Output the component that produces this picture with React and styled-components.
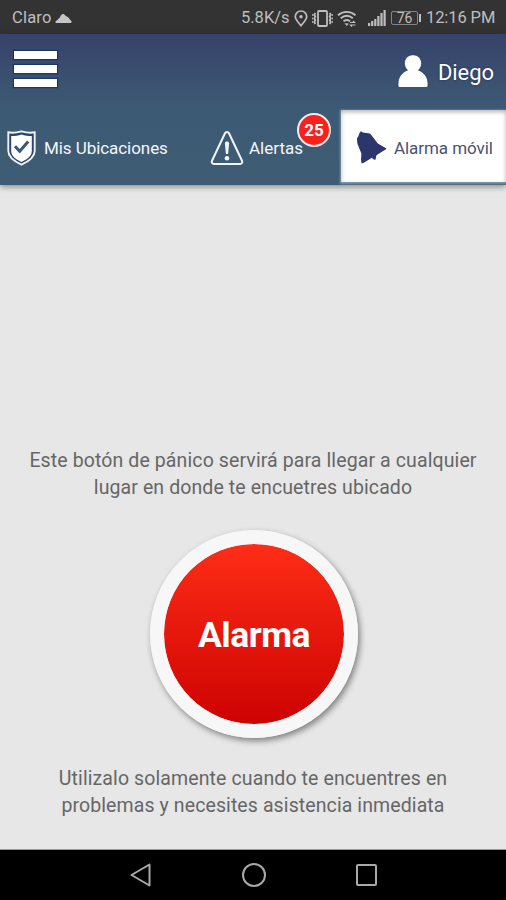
import React from "react";
import styled, { createGlobalStyle } from "styled-components";

const GlobalStyle = createGlobalStyle`
  * {
    box-sizing: border-box;
  }
  body {
    margin: 0;
    background: #000;
    font-family: Roboto, "Liberation Sans", sans-serif;
  }
`;

const Phone = styled.div`
  width: 506px;
  height: 900px;
  display: flex;
  flex-direction: column;
  overflow: hidden;
  & svg {
    display: block;
    flex: none;
  }
`;

const StatusBar = styled.div`
  height: 34px;
  flex: none;
  display: flex;
  align-items: center;
  padding: 2px 10px 0 12px;
  background: #333;
  color: #bebebe;
`;

const StatusText = styled.span`
  width: ${(props) => props.$width}px;
  font-size: 16.5px;
  line-height: 20px;
  letter-spacing: ${(props) => props.$spacing || 0}px;
  white-space: nowrap;
`;

const StatusIcons = styled.div`
  margin-left: auto;
  display: flex;
  align-items: center;
`;

const Gap = styled.span`
  width: ${(props) => props.$size}px;
`;

const Header = styled.header`
  position: relative;
  height: 151px;
  flex: none;
  display: flex;
  flex-direction: column;
  background: linear-gradient(#36426a 0%, #3d5a74 50%, #3f5c75 100%);
  box-shadow: 0 2px 6px rgba(0, 0, 0, 0.4);
`;

const TopRow = styled.div`
  height: 76px;
  flex: none;
  display: flex;
  justify-content: space-between;
  padding: 0 12px 0 14px;
`;

const MenuButton = styled.div`
  width: 43px;
  height: 36px;
  margin-top: 17px;
  display: flex;
  flex-direction: column;
  justify-content: space-between;
`;

const MenuBar = styled.div`
  height: 8px;
  background: #fff;
  box-shadow: 0 0 1px 1px rgba(8, 42, 100, 0.65);
`;

const User = styled.div`
  display: flex;
  align-items: flex-start;
  padding-top: 20px;
`;

const UserName = styled.span`
  width: 56px;
  margin: 5px 0 0 9px;
  color: #fff;
  font-size: 22px;
  line-height: 28px;
  letter-spacing: -0.1px;
  white-space: nowrap;
  text-shadow: 0 0 2px #182850;
`;

const Tabs = styled.nav`
  flex: 1;
  display: grid;
  grid-template-columns: 203px 138px 165px;
`;

const Tab = styled.div`
  position: relative;
  display: flex;
  align-items: center;
  height: ${(props) => (props.$active ? 72 : 75)}px;
  padding: ${(props) => props.$pad};
  background: ${(props) => (props.$active ? "#fff" : "transparent")};
  color: ${(props) => (props.$active ? "#4a5273" : "#f4f6fa")};
  box-shadow: ${(props) =>
    props.$active
      ? "inset 0 2px 4px rgba(0, 0, 0, 0.3), 0 1px 2px 1px rgba(190, 208, 222, 0.5)"
      : "none"};
`;

const TabLabel = styled.span`
  margin-left: ${(props) => props.$gap}px;
  font-size: 17px;
  line-height: 22px;
  letter-spacing: ${(props) => props.$spacing}px;
  white-space: nowrap;
`;

const Badge = styled.span`
  position: absolute;
  top: 3px;
  right: 10px;
  width: 34px;
  height: 34px;
  display: flex;
  align-items: center;
  justify-content: center;
  border: 2px solid #f3e9ee;
  border-radius: 50%;
  background: #f9211b;
  color: #fff;
  font-size: 17px;
  font-weight: 700;
  line-height: 20px;
`;

const Main = styled.main`
  flex: 1;
  display: flex;
  flex-direction: column;
  align-items: center;
  padding-top: 262px;
  background: #e7e7e7;
  border-bottom: 1px solid #999;
`;

const Hint = styled.p`
  margin: 0;
  display: flex;
  flex-direction: column;
  align-items: center;
  color: #666;
  font-size: 19.5px;
  line-height: 27px;
`;

const HintLine = styled.span`
  letter-spacing: ${(props) => props.$spacing}px;
  white-space: nowrap;
`;

const AlarmButton = styled.button`
  width: 208px;
  height: 208px;
  margin: 29px 0 27px 2px;
  padding: 2px 0 0;
  border: 14px solid #f7f7f7;
  border-radius: 50%;
  background: linear-gradient(#fe2d17, #cd0202) padding-box;
  box-shadow: 2px 3px 6px rgba(0, 0, 0, 0.45);
  color: #fff;
  font-family: inherit;
  font-size: 35.5px;
  font-weight: 700;
  line-height: 42px;
  letter-spacing: -0.5px;
`;

const NavBar = styled.div`
  height: 50px;
  flex: none;
  display: flex;
  align-items: center;
  justify-content: center;
  gap: 89px;
  background: #000;
`;

const CloudIcon = () => (
  <svg width="17" height="11" viewBox="0 0 17 11" fill="#c6c6c6">
    <path d="M1.200 10C-.2 9.600.2 8 1.800 7.400L5 4.300C6 1.600 7.500.6 9 1.200l2 1.900 2.700 1.700L15.500 7.200C17 8 17 9.600 15.800 10z" />
  </svg>
);

const PinIcon = () => (
  <svg width="14" height="17" viewBox="0 0 14 17" fill="none" stroke="#bebebe" strokeWidth="1.700">
    <path d="M7 15.700C4.500 12.500 1.300 9.600 1.300 6.700a5.700 5.700 0 0 1 11.400 0c0 2.900-3.200 5.800-5.700 9z" />
    <circle cx="7" cy="6.700" r="1.700" fill="#bebebe" stroke="none" />
  </svg>
);

const VibrateIcon = () => (
  <svg width="21" height="17" viewBox="0 0 21 17" fill="none" stroke="#bebebe">
    <rect x="6" y="1" width="9" height="15" rx="1" strokeWidth="1.800" />
    <path
      d="M3.300 3l-1 1.800 1 1.800-1 1.800 1 1.800-1 1.800 1 2M17.700 3l1 1.800-1 1.800 1 1.800-1 1.800 1 1.800-1 2"
      strokeWidth="1.800"
    />
    <path d="M.7 4v9M20.300 4v9" strokeWidth="1" strokeDasharray="2 1.500" />
  </svg>
);

const WifiIcon = () => (
  <svg width="20" height="17" viewBox="0 0 20 17" fill="none" stroke="#bebebe" strokeWidth="1.900">
    <path d="M1 5.200C6 .7 13.500.7 18.500 5.200M3.800 8.300c3.700-3.100 8.300-3.100 12 0M6.500 11.300c2-1.600 4.600-1.600 6.600 0" />
    <path d="M7.500 13.300l2.300 2.700 2-2.500z" fill="#bebebe" stroke="none" />
    <path d="M13 12.500h4.500l-1.500-1.500M18.500 15H13.500l1.500 1.500" strokeWidth="1.200" />
  </svg>
);

const SignalIcon = () => (
  <svg width="18" height="16" viewBox="0 0 18 16" fill="#bebebe">
    <path d="M0 13h2.200v3H0zM3.100 11h2.200v5H3.100zM6.200 9h2.200v7H6.200zM9.300 6h2.200v10H9.300zM12.400 3h2.200v13h-2.200zM15.500 0h2.200v16h-2.200z" />
  </svg>
);

const Battery = styled.div`
  position: relative;
  width: 27px;
  height: 14px;
  margin: 0 8px 0 5px;
  border: 1px solid #858585;
  border-radius: 2px;
  font-size: 14px;
  line-height: 13px;
  text-align: center;
  &::after {
    content: "";
    position: absolute;
    top: 2px;
    right: -4px;
    width: 2px;
    height: 8px;
    background: #bebebe;
  }
`;

const UserIcon = () => (
  <svg width="32" height="34" viewBox="0 0 32 34">
    <path
      d="M16 .8c5 0 8.600 3.700 8.600 8.500 0 3.200-1.500 5.400-3.100 6.900 5.600 1.900 9.500 7 9.500 13.300v2c0 1.300-.8 2-2 2H3c-1.200 0-2-.7-2-2v-2c0-6.300 3.900-11.400 9.500-13.300-1.600-1.500-3.100-3.700-3.100-6.900C7.400 4.500 11 .8 16 .8z"
      fill="#fff"
      stroke="#253c68"
      strokeWidth=".8"
    />
  </svg>
);

const ShieldIcon = () => (
  <svg width="29" height="36" viewBox="0 0 29 36">
    <path
      d="M1.300 2.300C6 3.300 10 2.600 14.500 1.300 19 2.600 23 3.300 27.700 2.300V21c0 6.300-5.300 10-13.200 13.700C6.600 31 1.300 27.300 1.300 21z"
      fill="#2c4372"
      stroke="#eef2f7"
      strokeWidth="1.900"
    />
    <path
      d="M4.200 6C8 6 11.200 5.600 14.500 4.400 17.800 5.600 21 6 24.800 6v15c0 5-4 7.900-10.300 10.900C8.200 28.900 4.200 26 4.200 21z"
      fill="#fff"
    />
    <path d="M8 16.300l4.700 5 8.500-9.700" fill="none" stroke="#3a5776" strokeWidth="3" />
  </svg>
);

const WarningIcon = () => (
  <svg width="34" height="36" viewBox="0 0 34 36">
    <path
      d="M15 3.300c.8-1.700 3.200-1.700 4 0l13 27.400c.8 1.700-.2 3.300-2 3.300H4c-1.800 0-2.800-1.600-2-3.300z"
      fill="none"
      stroke="#f1f5f9"
      strokeWidth="2"
    />
    <path d="M14.900 13.500c0-2.600 4.200-2.600 4.200 0l-1 10.500h-2.200z" fill="#f1f5f9" />
    <circle cx="17" cy="28.300" r="2.300" fill="#f1f5f9" />
  </svg>
);

const BellIcon = () => (
  <svg width="32" height="34" viewBox="0 0 32 34">
    <path
      d="M4 2.500L5 1l2 1.200L13.500 3l4.500 5.500 3.500 4.500 8.200 4.800-8.200 5-1.800 1.500L19 28.200l-1.700-.8-.8-1.700L7 31.500l-1 .3-.3-3L6 22.500 2 12.500l-.5-4.700L3 5.200z"
      fill="#2b376a"
      stroke="#2b376a"
      strokeWidth="1.200"
      strokeLinejoin="round"
    />
  </svg>
);

const BackIcon = () => (
  <svg width="24" height="26" viewBox="0 0 24 26" fill="none" stroke="#a9a9a9" strokeWidth="2">
    <path d="M21.500 2.500v21L3.500 13z" strokeLinejoin="round" />
  </svg>
);

const HomeIcon = () => (
  <svg width="26" height="26" viewBox="0 0 26 26" fill="none" stroke="#a9a9a9" strokeWidth="2">
    <circle cx="13" cy="13" r="11" />
  </svg>
);

const RecentsIcon = () => (
  <svg width="22" height="24" viewBox="0 0 22 24" fill="none" stroke="#a9a9a9" strokeWidth="2">
    <rect x="1" y="2" width="19" height="20" rx="1" />
  </svg>
);

const App = () => {
  return (
    <Phone>
      <GlobalStyle />
      <StatusBar>
        <StatusText $width={43} $spacing={0.2}>Claro</StatusText>
        <CloudIcon />
        <StatusIcons>
          <StatusText $width={53}>5.8K/s</StatusText>
          <PinIcon />
          <Gap $size={4} />
          <VibrateIcon />
          <Gap $size={4} />
          <WifiIcon />
          <Gap $size={11} />
          <SignalIcon />
          <Battery>76</Battery>
          <StatusText $width={70} $spacing={-0.1}>12:16 PM</StatusText>
        </StatusIcons>
      </StatusBar>
      <Header>
        <TopRow>
          <MenuButton>
            <MenuBar />
            <MenuBar />
            <MenuBar />
          </MenuButton>
          <User>
            <UserIcon />
            <UserName>Diego</UserName>
          </User>
        </TopRow>
        <Tabs>
          <Tab $pad="0 0 0 7px">
            <ShieldIcon />
            <TabLabel $gap={8} $spacing={-0.06}>Mis Ubicaciones</TabLabel>
          </Tab>
          <Tab $pad="0 0 0 7px">
            <WarningIcon />
            <TabLabel $gap={5} $spacing={0}>Alertas</TabLabel>
            <Badge>25</Badge>
          </Tab>
          <Tab $active $pad="4px 0 0 15px">
            <BellIcon />
            <TabLabel $gap={6} $spacing={-0.06}>Alarma móvil</TabLabel>
          </Tab>
        </Tabs>
      </Header>
      <Main>
        <Hint>
          <HintLine $spacing={0.11}>Este botón de pánico servirá para llegar a cualquier</HintLine>
          <HintLine $spacing={0.1}>lugar en donde te encuetres ubicado</HintLine>
        </Hint>
        <AlarmButton>Alarma</AlarmButton>
        <Hint>
          <HintLine $spacing={0.11}>Utilizalo solamente cuando te encuentres en</HintLine>
          <HintLine $spacing={0.1}>problemas y necesites asistencia inmediata</HintLine>
        </Hint>
      </Main>
      <NavBar>
        <BackIcon />
        <HomeIcon />
        <RecentsIcon />
      </NavBar>
    </Phone>
  );
};

export default App;
